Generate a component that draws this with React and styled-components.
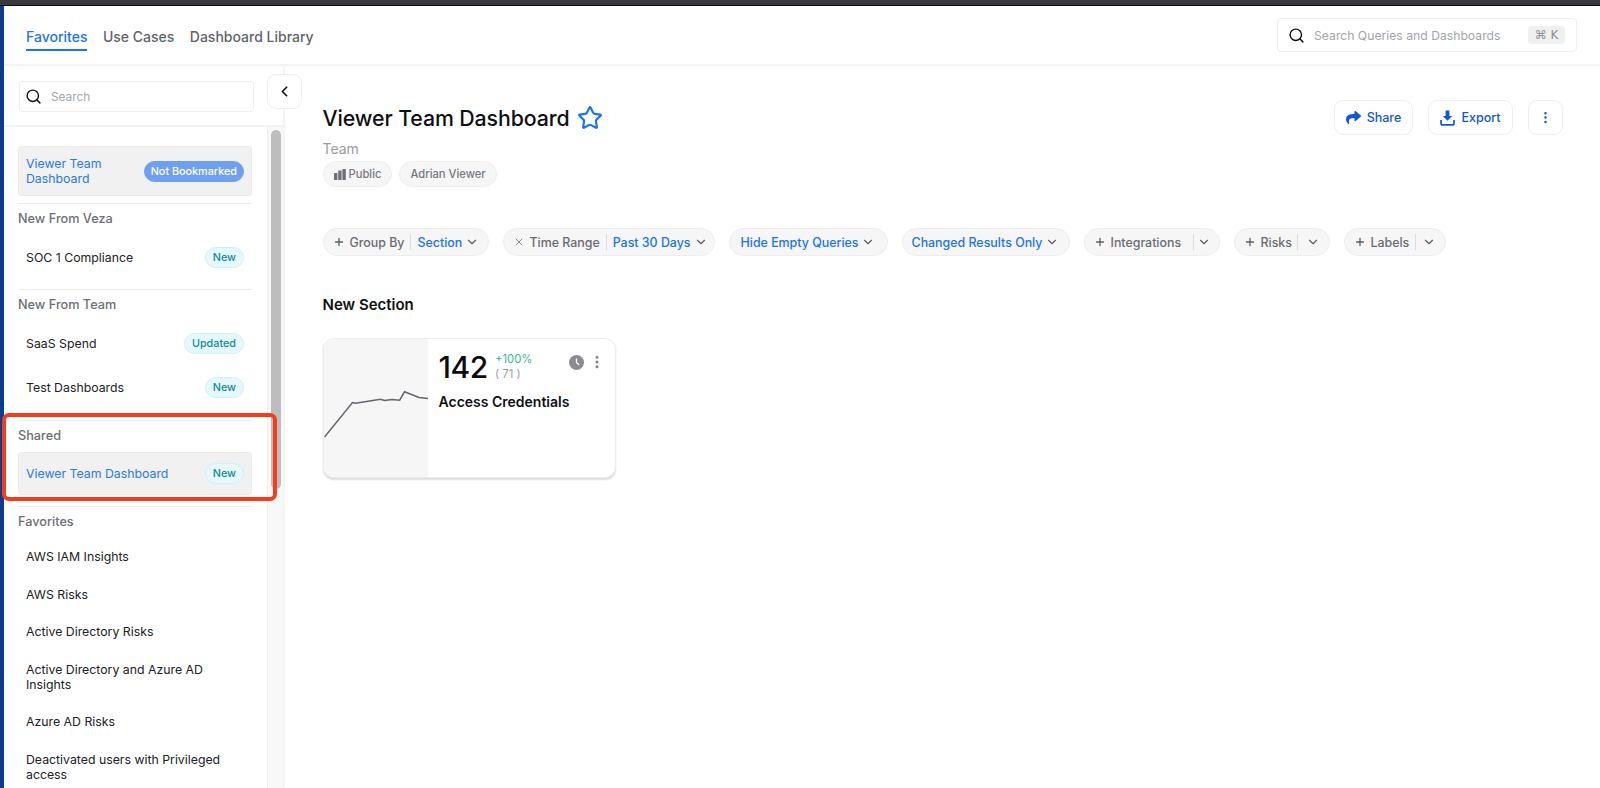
import React from 'react';
import styled, { createGlobalStyle } from 'styled-components';
import { ChevronDown, ChevronLeft, EllipsisVertical, Plus, Search, Star, X } from 'lucide-react';
import { FaShare } from 'react-icons/fa';

const GlobalStyle = createGlobalStyle`
    html, body {
        margin: 0;
        height: 100%;
        overflow: hidden;
        background: #fff;
        font-family: Inter, "Noto Sans", sans-serif;
        color: #111;
    }
    * {
        box-sizing: border-box;
    }
`;

const Page = styled.div`
    width: 1600px;
    height: 788px;
    display: flex;
    flex-direction: column;
    overflow: hidden;
`;

const WindowBar = styled.div`
    height: 6px;
    flex: none;
    background: #38383d;
    border-bottom: 1px solid #0c0c0e;
`;

const Frame = styled.div`
    flex: 1;
    min-height: 0;
    display: flex;
    flex-direction: column;
    border-left: 4px solid #0b3d8f;
`;

const TopNav = styled.header`
    height: 60px;
    flex: none;
    display: flex;
    align-items: center;
    justify-content: space-between;
    padding: 0 23px 0 22px;
    border-bottom: 2px solid #f4f4f5;
`;

const Tabs = styled.nav`
    display: flex;
    gap: 15.5px;
    align-self: stretch;
    padding-top: 20px;
`;

const Tab = styled.div`
    height: 25px;
    padding-top: 1px;
    font-size: 14px;
    font-weight: 500;
    line-height: 20px;
    color: ${p => (p.$active ? '#1a73f0' : '#62636b')};
    border-bottom: 2px solid ${p => (p.$active ? '#1a73f0' : 'transparent')};
`;

const GlobalSearch = styled.div`
    width: 300px;
    height: 34px;
    display: flex;
    align-items: center;
    padding: 0 11px 0 10px;
    border: 1px solid #eeeeef;
    border-radius: 4px;
    font-size: 12.2px;
    color: #a3a4a9;
    svg {
        color: #111;
        margin-right: 9px;
        flex: none;
    }
    span {
        flex: 1;
    }
`;

const Kbd = styled.kbd`
    width: 37px;
    height: 18px;
    flex: none;
    display: flex;
    align-items: center;
    justify-content: center;
    border-radius: 4px;
    background: #f0f0f1;
    color: #8d8e94;
    font-family: "DejaVu Sans", sans-serif;
    font-size: 12px;
`;

const Body = styled.div`
    flex: 1;
    min-height: 0;
    display: flex;
`;

const Sidebar = styled.aside`
    width: 281px;
    flex: none;
    position: relative;
    display: flex;
    flex-direction: column;
    border-right: 2px solid #f4f4f5;
`;

const SidebarSearchRow = styled.div`
    height: 61px;
    flex: none;
    padding: 15px 29px 0 15px;
    border-bottom: 2px solid #f4f4f5;
`;

const SidebarSearch = styled.div`
    height: 31px;
    display: flex;
    align-items: center;
    padding: 0 5px;
    border: 1px solid #eeeeef;
    border-radius: 3px;
    font-size: 11.8px;
    color: #a3a4a9;
    svg {
        color: #111;
        margin-right: 9px;
    }
`;

const CollapseButton = styled.button`
    position: absolute;
    top: 8px;
    left: 263px;
    width: 35px;
    height: 35px;
    display: flex;
    align-items: center;
    justify-content: center;
    padding: 0;
    background: #fff;
    color: #111;
    border: 1px solid #eeeeef;
    border-radius: 9px;
`;

const SidebarBody = styled.div`
    flex: 1;
    min-height: 0;
    display: flex;
`;

const List = styled.div`
    flex: 1;
    min-width: 0;
    overflow: hidden;
    padding: 19px 15px 0 14px;
`;

const ScrollTrack = styled.div`
    width: 16px;
    flex: none;
    background: #f8f8f8;
    border-left: 1px solid #efeff0;
    padding: 3px 0 0 3px;
`;

const ScrollThumb = styled.div`
    width: 10px;
    height: 359px;
    border-radius: 5px;
    background: #bdbdbd;
`;

const Divider = styled.div`
    height: 1px;
    margin: ${p => p.$margin || '7px 0 0'};
    background: #ececee;
`;

const GroupLabel = styled.div`
    font-size: 12.7px;
    font-weight: 500;
    line-height: 16px;
    color: #6d6e75;
    margin: 7px 0 ${p => p.$after}px;
`;

const Item = styled.div`
    min-height: ${p => p.$height || 37.6}px;
    display: flex;
    align-items: center;
    justify-content: space-between;
    gap: 8px;
    padding: ${p => p.$pad || 10.2}px 7px;
    font-size: 12.3px;
    line-height: 15px;
    color: ${p => (p.$active ? '#2a78ee' : '#202126')};
    background: ${p => (p.$active ? '#f1f1f2' : 'transparent')};
    border: 1px solid ${p => (p.$active ? '#ebebec' : 'transparent')};
    border-radius: 3px;
`;

const ItemName = styled.span`
    max-width: ${p => p.$max || 'none'};
`;

const Badge = styled.span`
    flex: none;
    height: 21px;
    display: flex;
    align-items: center;
    padding: 0 ${p => (p.$solid ? 6 : 7)}px;
    border-radius: 11px;
    font-size: 10.8px;
    font-weight: 500;
    color: ${p => (p.$solid ? '#fff' : '#128a9c')};
    background: ${p => (p.$solid ? '#6f9ff0' : '#e6f8fc')};
    border: 1px solid ${p => (p.$solid ? '#6f9ff0' : '#cdf1f8')};
`;

const Highlight = styled.div`
    position: absolute;
    left: -2px;
    top: 347px;
    width: 275px;
    height: 88px;
    border: 4px solid #f53d1d;
    border-radius: 7px;
    pointer-events: none;
`;

const Main = styled.main`
    flex: 1;
    min-width: 0;
    padding: 34px 37px 0 37.5px;
`;

const TitleRow = styled.div`
    display: flex;
    align-items: flex-start;
    justify-content: space-between;
`;

const TitleBlock = styled.div`
    display: flex;
    flex-direction: column;
    padding-top: 2px;
`;

const Title = styled.h1`
    margin: 0;
    display: flex;
    align-items: center;
    gap: 8px;
    font-size: 21.3px;
    font-weight: 500;
    line-height: 32px;
    letter-spacing: -0.1px;
    color: #0f0f12;
    svg {
        color: #1a73f0;
    }
`;

const Subtitle = styled.div`
    margin-top: 6px;
    font-size: 14px;
    line-height: 18px;
    color: #9b9ca2;
`;

const Tags = styled.div`
    display: flex;
    gap: 7px;
    margin-top: 3px;
`;

const Tag = styled.span`
    height: 26px;
    display: flex;
    align-items: center;
    gap: 3px;
    padding: 0 10px;
    border-radius: 13px;
    background: #f6f6f7;
    border: 1px solid #eeeeef;
    font-size: 11.2px;
    font-weight: 500;
    color: #77787f;
`;

const Actions = styled.div`
    display: flex;
    gap: 15px;
`;

const ActionButton = styled.button`
    height: 35px;
    display: flex;
    align-items: center;
    justify-content: center;
    gap: 6px;
    width: ${p => p.$width}px;
    padding: 0;
    background: #fff;
    border: 1px solid #ededee;
    border-radius: 9px;
    font-family: inherit;
    font-size: 12.5px;
    font-weight: 500;
    color: #1257d6;
`;

const Filters = styled.div`
    display: flex;
    gap: 14px;
    margin-top: 41px;
`;

const Pill = styled.div`
    width: ${p => p.$width}px;
    height: 28px;
    flex: none;
    display: flex;
    align-items: center;
    justify-content: ${p => (p.$center ? 'center' : 'flex-start')};
    padding: 0 ${p => (p.$center ? 0 : 9)}px;
    border-radius: 14px;
    background: #f6f6f7;
    border: 1px solid #eeeeef;
    font-size: 12.4px;
    font-weight: 500;
    color: #6a6b72;
    white-space: nowrap;
`;

const PillIcon = styled.span`
    display: flex;
    margin-right: 5px;
    color: ${p => p.$color || '#5c5d64'};
`;

const Sep = styled.span`
    width: 1px;
    height: 16px;
    flex: none;
    margin: 0 ${p => p.$after ?? 6}px 0 ${p => p.$before ?? 6}px;
    background: #dcdcdf;
`;

const Value = styled.span`
    color: #1a73f0;
`;

const Chevron = styled(ChevronDown)`
    margin-left: 3px;
    color: #5c5d64;
    flex: none;
`;

const SectionTitle = styled.h2`
    margin: 39px 0 0;
    font-size: 15px;
    font-weight: 600;
    line-height: 20px;
    color: #111;
`;

const Card = styled.div`
    width: 293px;
    height: 140px;
    margin-top: 23px;
    display: flex;
    overflow: hidden;
    background: #fff;
    border: 1px solid #ececed;
    border-radius: 11px;
    box-shadow: 0 2px 2px rgba(0, 0, 0, 0.14);
`;

const ChartPane = styled.div`
    width: 104px;
    flex: none;
    background: #f6f6f7;
    svg {
        display: block;
    }
`;

const CardBody = styled.div`
    flex: 1;
    padding: 12px 10px 0 11px;
`;

const StatRow = styled.div`
    display: flex;
    align-items: center;
`;

const StatValue = styled.div`
    font-size: 30px;
    font-weight: 500;
    line-height: 32px;
    letter-spacing: -0.4px;
    color: #0c0c0f;
`;

const Delta = styled.div`
    margin-left: 7px;
    font-size: 11.3px;
    line-height: 15px;
    color: #9a9ba1;
    div:first-child {
        color: #37b98f;
    }
`;

const CardIcons = styled.div`
    margin-left: auto;
    display: flex;
    align-items: center;
    gap: 5px;
    margin-top: -10px;
    color: #85868c;
`;

const CardTitle = styled.div`
    margin-top: 10px;
    font-size: 14px;
    font-weight: 600;
    line-height: 18px;
    color: #101014;
`;

const ClockIcon = () => (
    <svg width="15" height="15" viewBox="0 0 15 15">
        <circle cx="7.5" cy="7.5" r="7.5" fill="#8b8c93" />
        <path d="M7.5 3.4v4.3l2.6 2" fill="none" stroke="#fff" strokeWidth="1.3" />
    </svg>
);

const PublicIcon = () => (
    <svg width="12" height="11" viewBox="0 0 12 11" fill="#707178">
        <rect x="0" y="4" width="3.4" height="7" rx="0.5" />
        <rect x="4.2" y="1.5" width="3.4" height="9.5" rx="0.5" />
        <rect x="8.4" y="0" width="3.4" height="11" rx="0.5" />
    </svg>
);

const ExportIcon = () => (
    <svg width="15" height="16" viewBox="0 0 15 16" fill="none">
        <path d="M5.6 0.5h3.8v5.6h2.8L7.5 10.8 2.8 6.1h2.8z" fill="#1257d6" />
        <path d="M1 10v3.2c0 1 .7 1.7 1.7 1.7h9.6c1 0 1.7-.7 1.7-1.7V10" stroke="#1257d6" strokeWidth="1.7" />
    </svg>
);

const SparkLine = () => (
    <svg width="104" height="138" viewBox="0 0 104 138">
        <polyline
            points="0.5,98 28.5,63.5 31.5,64.2 56.5,60.2 60.5,61.5 68,60.5 75.7,61.2 80.5,52.8 95,58.5 104,59.5"
            fill="none"
            stroke="#63646e"
            strokeWidth="1.5"
        />
    </svg>
);

const favorites = [
    'AWS IAM Insights',
    'AWS Risks',
    'Active Directory Risks',
    'Active Directory and Azure AD Insights',
    'Azure AD Risks',
    'Deactivated users with Privileged access',
];

export default function App() {
    return (
        <Page>
            <GlobalStyle />
            <WindowBar />
            <Frame>
                <TopNav>
                    <Tabs>
                        <Tab $active>Favorites</Tab>
                        <Tab>Use Cases</Tab>
                        <Tab>Dashboard Library</Tab>
                    </Tabs>
                    <GlobalSearch>
                        <Search size={17} strokeWidth={2} />
                        <span>Search Queries and Dashboards</span>
                        <Kbd>⌘ K</Kbd>
                    </GlobalSearch>
                </TopNav>
                <Body>
                    <Sidebar>
                        <SidebarSearchRow>
                            <SidebarSearch>
                                <Search size={17} strokeWidth={2} />
                                Search
                            </SidebarSearch>
                        </SidebarSearchRow>
                        <CollapseButton>
                            <ChevronLeft size={17} strokeWidth={2.4} />
                        </CollapseButton>
                        <SidebarBody>
                            <List>
                                <Item $active $height={50} $pad={9}>
                                    <ItemName $max="90px">Viewer Team Dashboard</ItemName>
                                    <Badge $solid>Not Bookmarked</Badge>
                                </Item>
                                <Divider />
                                <GroupLabel $after={8}>New From Veza</GroupLabel>
                                <Item $height={44}>
                                    SOC 1 Compliance
                                    <Badge>New</Badge>
                                </Item>
                                <Divider $margin="10px 0 0" />
                                <GroupLabel $after={8}>New From Team</GroupLabel>
                                <Item $height={44}>
                                    SaaS Spend
                                    <Badge>Updated</Badge>
                                </Item>
                                <Item $height={45}>
                                    Test Dashboards
                                    <Badge>New</Badge>
                                </Item>
                                <Divider $margin="10px 0 0" />
                                <GroupLabel $after={8}>Shared</GroupLabel>
                                <Item $active $height={43} $pad={9}>
                                    Viewer Team Dashboard
                                    <Badge>New</Badge>
                                </Item>
                                <Divider $margin="11px 0 0" />
                                <GroupLabel $after={8}>Favorites</GroupLabel>
                                {favorites.map(name => (
                                    <Item key={name}>
                                        <ItemName $max="200px">{name}</ItemName>
                                    </Item>
                                ))}
                            </List>
                            <ScrollTrack>
                                <ScrollThumb />
                            </ScrollTrack>
                        </SidebarBody>
                        <Highlight />
                    </Sidebar>
                    <Main>
                        <TitleRow>
                            <TitleBlock>
                                <Title>
                                    Viewer Team Dashboard
                                    <Star size={26} strokeWidth={2} />
                                </Title>
                                <Subtitle>Team</Subtitle>
                                <Tags>
                                    <Tag>
                                        <PublicIcon />
                                        Public
                                    </Tag>
                                    <Tag>Adrian Viewer</Tag>
                                </Tags>
                            </TitleBlock>
                            <Actions>
                                <ActionButton $width={79}>
                                    <FaShare size={15} />
                                    Share
                                </ActionButton>
                                <ActionButton $width={85}>
                                    <ExportIcon />
                                    Export
                                </ActionButton>
                                <ActionButton $width={35}>
                                    <EllipsisVertical size={15} />
                                </ActionButton>
                            </Actions>
                        </TitleRow>
                        <Filters>
                            <Pill $width={166}>
                                <PillIcon><Plus size={12} strokeWidth={2.6} /></PillIcon>
                                Group By
                                <Sep />
                                <Value>Section</Value>
                                <Chevron size={14} />
                            </Pill>
                            <Pill $width={212}>
                                <PillIcon $color="#85868c"><X size={12} /></PillIcon>
                                Time Range
                                <Sep />
                                <Value>Past 30 Days</Value>
                                <Chevron size={14} />
                            </Pill>
                            <Pill $width={159} $center>
                                <Value>Hide Empty Queries</Value>
                                <Chevron size={14} />
                            </Pill>
                            <Pill $width={168} $center>
                                <Value>Changed Results Only</Value>
                                <Chevron size={14} />
                            </Pill>
                            <Pill $width={136}>
                                <PillIcon><Plus size={12} strokeWidth={2.6} /></PillIcon>
                                Integrations
                                <Sep $before={12} $after={0} />
                                <Chevron size={14} />
                            </Pill>
                            <Pill $width={96}>
                                <PillIcon><Plus size={12} strokeWidth={2.6} /></PillIcon>
                                Risks
                                <Sep $before={5} $after={5} />
                                <Chevron size={14} />
                            </Pill>
                            <Pill $width={102}>
                                <PillIcon><Plus size={12} strokeWidth={2.6} /></PillIcon>
                                Labels
                                <Sep $before={6} $after={3} />
                                <Chevron size={14} />
                            </Pill>
                        </Filters>
                        <SectionTitle>New Section</SectionTitle>
                        <Card>
                            <ChartPane>
                                <SparkLine />
                            </ChartPane>
                            <CardBody>
                                <StatRow>
                                    <StatValue>142</StatValue>
                                    <Delta>
                                        <div>+100%</div>
                                        <div>( 71 )</div>
                                    </Delta>
                                    <CardIcons>
                                        <ClockIcon />
                                        <EllipsisVertical size={16} strokeWidth={2.6} />
                                    </CardIcons>
                                </StatRow>
                                <CardTitle>Access Credentials</CardTitle>
                            </CardBody>
                        </Card>
                    </Main>
                </Body>
            </Frame>
        </Page>
    );
}
